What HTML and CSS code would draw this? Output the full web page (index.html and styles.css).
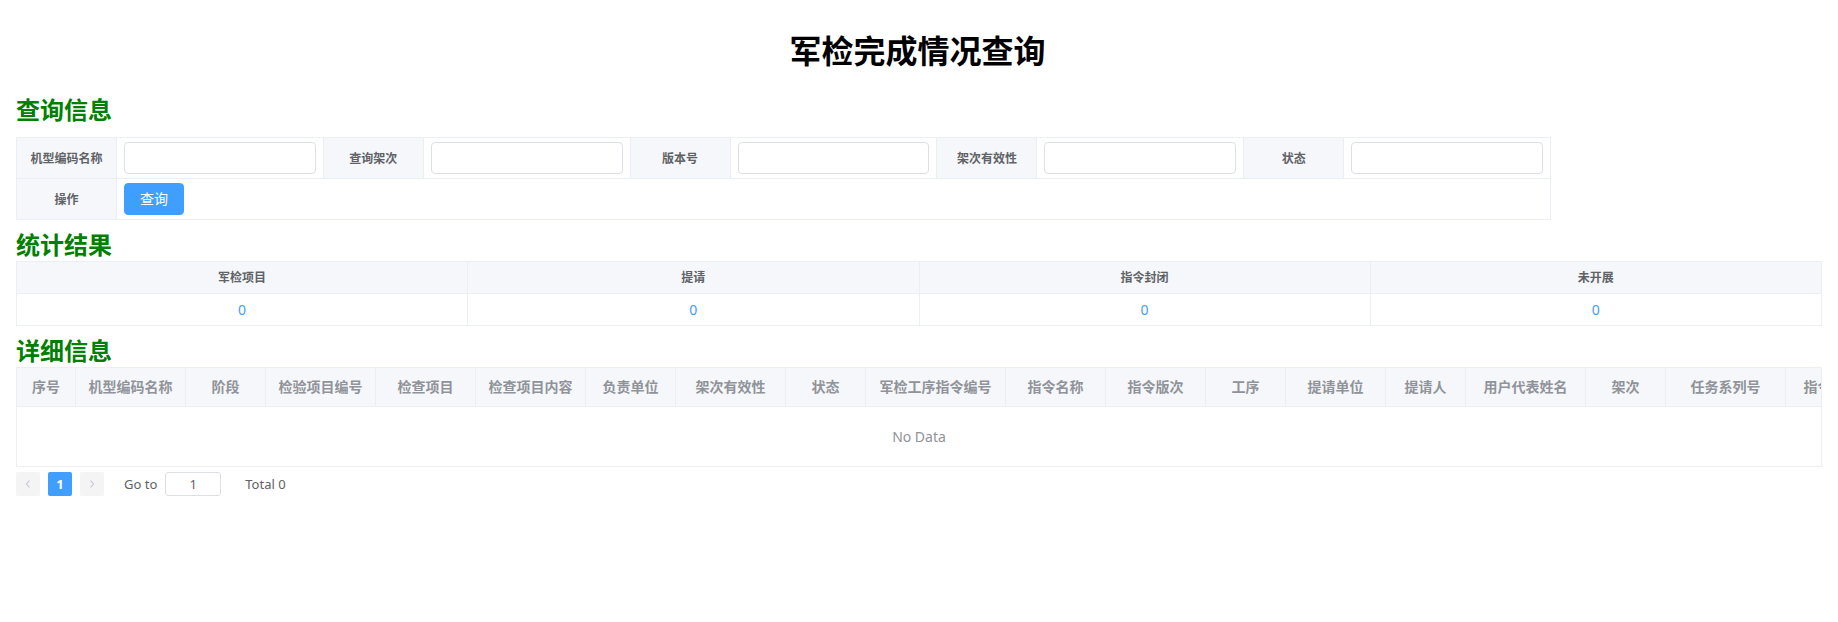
FILE: index.html
```html
<!DOCTYPE html>
<html lang="zh-CN">
<head>
<meta charset="utf-8">
<title>军检完成情况查询</title>
<link rel="stylesheet" href="styles.css">
</head>
<body>
<div class="page">
  <h1 class="title">军检完成情况查询</h1>

  <h2 class="section section-query">查询信息</h2>
  <table class="query">
    <colgroup>
      <col class="col-label"><col>
      <col class="col-label"><col>
      <col class="col-label"><col>
      <col class="col-label"><col>
      <col class="col-label"><col>
    </colgroup>
    <tr>
      <th>机型编码名称</th><td><input class="inp" type="text"></td>
      <th>查询架次</th><td><input class="inp" type="text"></td>
      <th>版本号</th><td><input class="inp" type="text"></td>
      <th>架次有效性</th><td><input class="inp" type="text"></td>
      <th>状态</th><td><input class="inp" type="text"></td>
    </tr>
    <tr>
      <th>操作</th><td colspan="9"><button class="btn" type="button">查询</button></td>
    </tr>
  </table>

  <h2 class="section section-stats">统计结果</h2>
  <table class="stats">
    <tr><th>军检项目</th><th>提请</th><th>指令封闭</th><th>未开展</th></tr>
    <tr><td>0</td><td>0</td><td>0</td><td>0</td></tr>
  </table>

  <h2 class="section section-detail">详细信息</h2>
  <div class="grid">
    <div class="grid-head">
      <div class="hc w59">序号</div>
      <div class="hc w110">机型编码名称</div>
      <div class="hc w80">阶段</div>
      <div class="hc w110">检验项目编号</div>
      <div class="hc w100">检查项目</div>
      <div class="hc w110">检查项目内容</div>
      <div class="hc w90">负责单位</div>
      <div class="hc w110">架次有效性</div>
      <div class="hc w80">状态</div>
      <div class="hc w140">军检工序指令编号</div>
      <div class="hc w100">指令名称</div>
      <div class="hc w100">指令版次</div>
      <div class="hc w80">工序</div>
      <div class="hc w100">提请单位</div>
      <div class="hc w80">提请人</div>
      <div class="hc w120">用户代表姓名</div>
      <div class="hc w80">架次</div>
      <div class="hc w120">任务系列号</div>
      <div class="hc w120">指令封闭状态</div>
      <div class="hc w120">备注</div>
    </div>
    <div class="empty">No Data</div>
  </div>

  <div class="pager">
    <button class="pg-btn" type="button" aria-label="上一页">
      <svg width="8" height="10" viewBox="0 0 8 10"><path d="M5.5 1.5 L2.5 5 L5.5 8.5" fill="none" stroke="#c0c4cc" stroke-width="1.1"/></svg>
    </button>
    <span class="pg-num">1</span>
    <button class="pg-btn" type="button" aria-label="下一页">
      <svg width="8" height="10" viewBox="0 0 8 10"><path d="M2.5 1.5 L5.5 5 L2.5 8.5" fill="none" stroke="#c0c4cc" stroke-width="1.1"/></svg>
    </button>
    <span class="goto">Go to</span>
    <input class="jump" type="text" value="1">
    <span class="total">Total 0</span>
  </div>
</div>
</body>
</html>
```

FILE: styles.css
```css
html, body {
  margin: 0;
  padding: 0;
  background: #ffffff;
}

body {
  font-family: "Noto Sans", "Noto Sans CJK SC", sans-serif;
  color: #606266;
}

.page {
  padding: 0 16px;
}

.title {
  margin: 29px 0 0;
  padding-right: 3px;
  font-size: 32px;
  line-height: 44px;
  font-weight: 700;
  color: #000000;
  text-align: center;
}

.section {
  margin: 0;
  font-size: 24px;
  line-height: 32px;
  font-weight: 700;
  color: #008000;
}

.section-query {
  margin-top: 21px;
  margin-bottom: 11px;
}

.section-stats {
  margin-top: 9px;
}

.section-detail {
  margin-top: 9px;
}

/* query descriptions */
.query {
  width: 85%;
  border-collapse: collapse;
  table-layout: fixed;
}

.query .col-label {
  width: 100px;
}

.query th,
.query td {
  border: 1px solid #ebeef5;
  padding: 4px 7px;
  font-size: 12px;
}

.query th {
  background: #f5f7fa;
  color: #606266;
  font-weight: 700;
  text-align: center;
}

.query td {
  background: #ffffff;
}

.inp {
  display: block;
  box-sizing: border-box;
  width: 100%;
  height: 32px;
  margin: 0;
  border: 1px solid #dcdfe6;
  border-radius: 4px;
  background: #ffffff;
  padding: 0 11px;
  font-size: 14px;
  outline: none;
}

.btn {
  display: block;
  box-sizing: border-box;
  width: 60px;
  height: 32px;
  margin: 0;
  padding: 0;
  border: 1px solid #409eff;
  border-radius: 4px;
  background: #409eff;
  color: #ffffff;
  font-family: "Noto Sans", "Noto Sans CJK SC", sans-serif;
  font-size: 14px;
  line-height: 30px;
}

/* stats */
.stats {
  width: 100%;
  border-collapse: collapse;
  table-layout: fixed;
}

.stats th,
.stats td {
  border: 1px solid #ebeef5;
  padding: 0;
  height: 31px;
  line-height: 31px;
  text-align: center;
}

.stats th {
  background: #f5f7fa;
  color: #606266;
  font-size: 12px;
  font-weight: 700;
}

.stats td {
  color: #409eff;
  font-size: 14px;
  background: #ffffff;
}

/* detail grid */
.grid {
  border: 1px solid #ebeef5;
  overflow: hidden;
}

.grid-head {
  display: flex;
  overflow: hidden;
  background: #f5f7fa;
  border-bottom: 1px solid #ebeef5;
}

.hc {
  box-sizing: border-box;
  flex: 0 0 auto;
  height: 38px;
  line-height: 38px;
  font-size: 14px;
  font-weight: 700;
  color: #909399;
  text-align: center;
  white-space: nowrap;
  overflow: hidden;
  border-right: 1px solid #ebeef5;
}

.w59 { width: 59px; }
.w80 { width: 80px; }
.w90 { width: 90px; }
.w100 { width: 100px; }
.w110 { width: 110px; }
.w120 { width: 120px; }
.w140 { width: 140px; }

.empty {
  height: 59px;
  line-height: 59px;
  text-align: center;
  font-size: 14px;
  color: #909399;
}

/* pagination */
.pager {
  display: flex;
  align-items: center;
  margin-top: 5px;
  height: 24px;
  font-size: 13px;
  color: #606266;
}

.pg-btn {
  display: flex;
  align-items: center;
  justify-content: center;
  width: 24px;
  height: 24px;
  margin: 0;
  padding: 0;
  border: none;
  border-radius: 2px;
  background: #f4f4f5;
}

.pg-num {
  width: 24px;
  height: 24px;
  margin: 0 8px;
  border-radius: 2px;
  background: #409eff;
  color: #ffffff;
  font-weight: 700;
  font-size: 13px;
  line-height: 24px;
  text-align: center;
}

.goto {
  margin-left: 20px;
  line-height: 24px;
}

.jump {
  box-sizing: border-box;
  width: 56px;
  height: 24px;
  margin: 0 0 0 8px;
  border: 1px solid #dcdfe6;
  border-radius: 3px;
  padding: 0;
  text-align: center;
  font-family: "Noto Sans", "Noto Sans CJK SC", sans-serif;
  font-size: 13px;
  color: #606266;
  outline: none;
}

.total {
  margin-left: 24px;
  line-height: 24px;
}
```
